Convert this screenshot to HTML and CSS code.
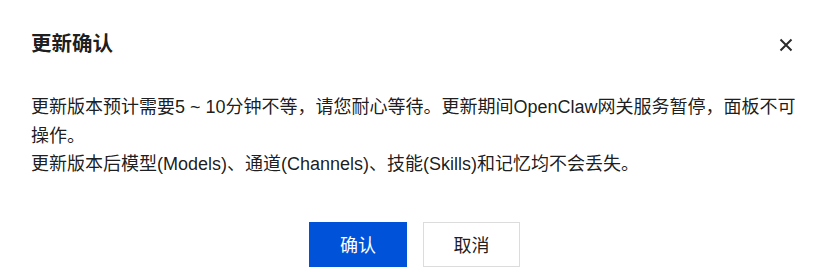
FILE: index.html
```html
<!DOCTYPE html>
<html lang="zh-CN">
<head>
<meta charset="utf-8">
<title>更新确认</title>
<link rel="stylesheet" href="styles.css">
</head>
<body>
<div class="dialog">
  <div class="dialog-header">
    <h2 class="dialog-title">更新确认</h2>
    <button class="dialog-close" aria-label="关闭">
      <svg width="14" height="14" viewBox="0 0 14 14" aria-hidden="true">
        <path d="M1.5 1.5 L12.5 12.5 M12.5 1.5 L1.5 12.5" stroke="#2b2b2b" stroke-width="2" fill="none"/>
      </svg>
    </button>
  </div>
  <div class="dialog-body">
    <p>更新版本预计需要5 ~ 10分钟不等，请您耐心等待。更新期间OpenClaw网关服务暂停，面板不可操作。</p>
    <p>更新版本后模型(Models)、通道(Channels)、技能(Skills)和记忆均不会丢失。</p>
  </div>
  <div class="dialog-footer">
    <button class="btn btn-primary">确认</button>
    <button class="btn btn-default">取消</button>
  </div>
</div>
</body>
</html>
```

FILE: styles.css
```css
html, body {
  margin: 0;
  padding: 0;
  background: #ffffff;
}

body {
  font-family: "Liberation Sans", "Noto Sans CJK SC", sans-serif;
  color: rgba(0, 0, 0, 0.9);
}

.dialog {
  width: 829px;
  height: 276px;
  box-sizing: border-box;
  padding: 27px 31px 0 31px;
  display: flex;
  flex-direction: column;
}

.dialog-header {
  display: flex;
  align-items: center;
  justify-content: space-between;
  height: 30px;
}

.dialog-title {
  margin: 0;
  font-size: 20.5px;
  line-height: 30px;
  font-weight: 700;
  font-family: "Noto Sans CJK SC", sans-serif;
}

.dialog-close {
  border: none;
  background: transparent;
  padding: 0;
  margin: 5px 5px 0 0;
  width: 14px;
  height: 14px;
  display: flex;
  cursor: pointer;
}

.dialog-body {
  margin-top: 36px;
  font-size: 18px;
  line-height: 28.5px;
}

.dialog-body p {
  margin: 0;
}

.dialog-footer {
  margin-top: 43px;
  display: flex;
  justify-content: center;
  gap: 16px;
}

.btn {
  height: 45px;
  box-sizing: border-box;
  font-family: "Noto Sans CJK SC", sans-serif;
  font-size: 18px;
  padding: 0;
  border-radius: 0;
  cursor: pointer;
}

.btn-primary {
  width: 98px;
  background: #0052d9;
  border: 1px solid #0052d9;
  color: #ffffff;
}

.btn-default {
  width: 97px;
  background: #ffffff;
  border: 1px solid #dcdcdc;
  color: rgba(0, 0, 0, 0.9);
}
```
